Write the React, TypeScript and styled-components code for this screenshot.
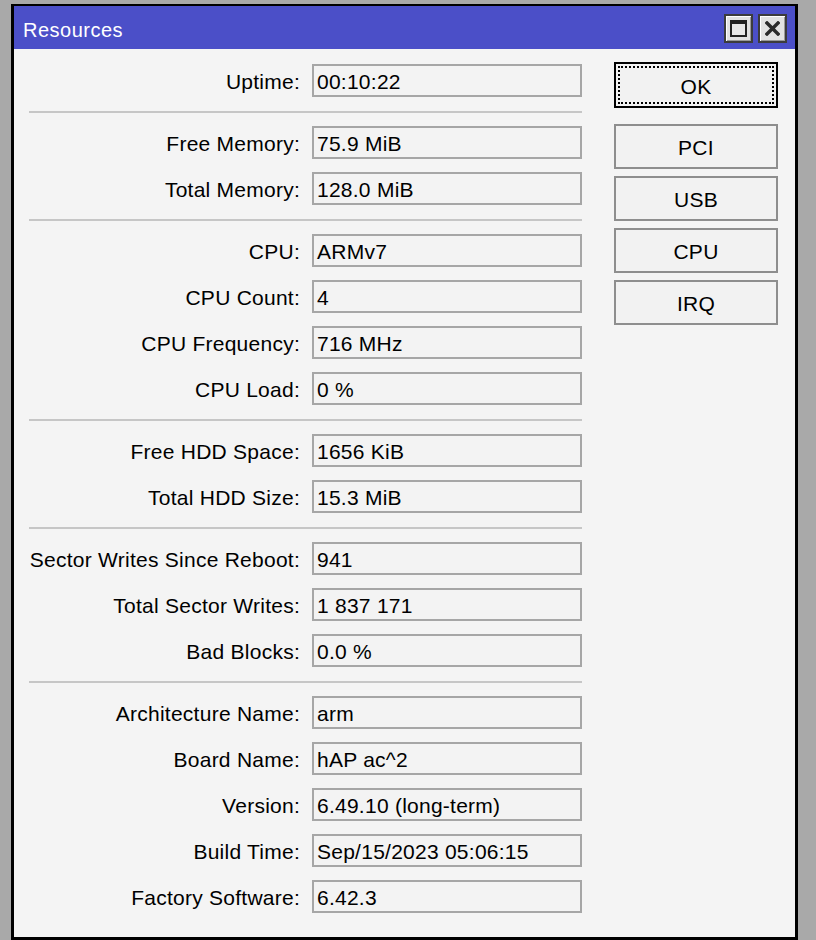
import React from "react";
import styled, { createGlobalStyle } from "styled-components";

const GlobalStyle = createGlobalStyle`
  html, body {
    margin: 0;
    padding: 0;
    background: #a9a9a9;
  }
  body {
    font-family: "Liberation Sans", Arial, sans-serif;
    font-size: 21px;
    letter-spacing: 0.25px;
    color: #000;
  }
`;

const Window = styled.div`
  box-sizing: border-box;
  margin: 4px 0 0 11px;
  width: 787px;
  height: 936px;
  border: 3px solid #000;
  border-top-width: 2px;
  background: #f4f4f4;
  display: flex;
  flex-direction: column;
`;

const TitleBar = styled.div`
  height: 43px;
  flex: none;
  background: #4b4fc8;
  display: flex;
  align-items: center;
  padding: 0 8px 0 9px;
  color: #fff;
`;

const TitleText = styled.div`
  flex: 1;
  font-size: 20px;
  letter-spacing: 0.5px;
  padding-top: 6px;
`;

const TitleButtons = styled.div`
  display: flex;
  gap: 5px;
  margin-top: 1px;
`;

const TitleButton = styled.div`
  box-sizing: border-box;
  width: 29px;
  height: 29px;
  background: #e2e2e2;
  border: 2px solid #3c3c3c;
  box-shadow: inset 1px 1px 0 #fff, inset -1px -1px 0 #9a9a9a;
  display: flex;
  align-items: center;
  justify-content: center;
`;

const MaxGlyph = styled.div`
  box-sizing: border-box;
  width: 17px;
  height: 17px;
  border: 2px solid #222;
  border-top-width: 4px;
  background: #e8e8e8;
`;

const Body = styled.div`
  display: flex;
  align-items: flex-start;
  gap: 32px;
  padding: 13px 0 0 15px;
`;

const Form = styled.div`
  width: 553px;
  padding-top: 2px;
  display: flex;
  flex-direction: column;
`;

const Group = styled.div`
  display: flex;
  flex-direction: column;
  gap: 13px;
`;

const Separator = styled.div`
  height: 2px;
  background: #c6c6c6;
  margin: 14px 0 13px;
`;

const Row = styled.div`
  display: grid;
  grid-template-columns: 271px 270px;
  column-gap: 12px;
  align-items: center;
`;

const Label = styled.div`
  text-align: right;
  white-space: nowrap;
  padding-top: 2px;
`;

const Field = styled.div`
  box-sizing: border-box;
  height: 33px;
  border: 2px solid #a6a6a6;
  background: #f3f3f3;
  padding: 2px 0 0 3px;
  display: flex;
  align-items: center;
  white-space: nowrap;
`;

const Side = styled.div`
  width: 164px;
  display: flex;
  flex-direction: column;
  gap: 7px;
`;

const ActionButton = styled.div<{ $focused?: boolean }>`
  box-sizing: border-box;
  position: relative;
  height: ${(p) => (p.$focused ? "46px" : "45px")};
  margin-bottom: ${(p) => (p.$focused ? "9px" : "0")};
  background: #f2f2f2;
  border: 2px solid ${(p) => (p.$focused ? "#000" : "#8e8e8e")};
  display: flex;
  align-items: center;
  justify-content: center;
  padding-top: 3px;

  &::after {
    content: "";
    display: ${(p) => (p.$focused ? "block" : "none")};
    position: absolute;
    inset: 2px;
    border: 2px dotted #000;
  }
`;

type Item = [string, string];

const groups: Item[][] = [
  [["Uptime:", "00:10:22"]],
  [
    ["Free Memory:", "75.9 MiB"],
    ["Total Memory:", "128.0 MiB"],
  ],
  [
    ["CPU:", "ARMv7"],
    ["CPU Count:", "4"],
    ["CPU Frequency:", "716 MHz"],
    ["CPU Load:", "0 %"],
  ],
  [
    ["Free HDD Space:", "1656 KiB"],
    ["Total HDD Size:", "15.3 MiB"],
  ],
  [
    ["Sector Writes Since Reboot:", "941"],
    ["Total Sector Writes:", "1 837 171"],
    ["Bad Blocks:", "0.0 %"],
  ],
  [
    ["Architecture Name:", "arm"],
    ["Board Name:", "hAP ac^2"],
    ["Version:", "6.49.10 (long-term)"],
    ["Build Time:", "Sep/15/2023 05:06:15"],
    ["Factory Software:", "6.42.3"],
  ],
];

const CloseIcon = () => (
  <svg width="15" height="15" viewBox="0 0 15 15">
    <path d="M2 2 L13 13 M13 2 L2 13" stroke="#2a2a2a" strokeWidth="3.4" strokeLinecap="square" />
  </svg>
);

export default function App() {
  return (
    <>
      <GlobalStyle />
      <Window>
        <TitleBar>
          <TitleText>Resources</TitleText>
          <TitleButtons>
            <TitleButton>
              <MaxGlyph />
            </TitleButton>
            <TitleButton>
              <CloseIcon />
            </TitleButton>
          </TitleButtons>
        </TitleBar>
        <Body>
          <Form>
            {groups.map((g, gi) => (
              <React.Fragment key={gi}>
                {gi > 0 && <Separator />}
                <Group>
                  {g.map(([label, value]) => (
                    <Row key={label}>
                      <Label>{label}</Label>
                      <Field>{value}</Field>
                    </Row>
                  ))}
                </Group>
              </React.Fragment>
            ))}
          </Form>
          <Side>
            <ActionButton $focused>OK</ActionButton>
            <ActionButton>PCI</ActionButton>
            <ActionButton>USB</ActionButton>
            <ActionButton>CPU</ActionButton>
            <ActionButton>IRQ</ActionButton>
          </Side>
        </Body>
      </Window>
    </>
  );
}
